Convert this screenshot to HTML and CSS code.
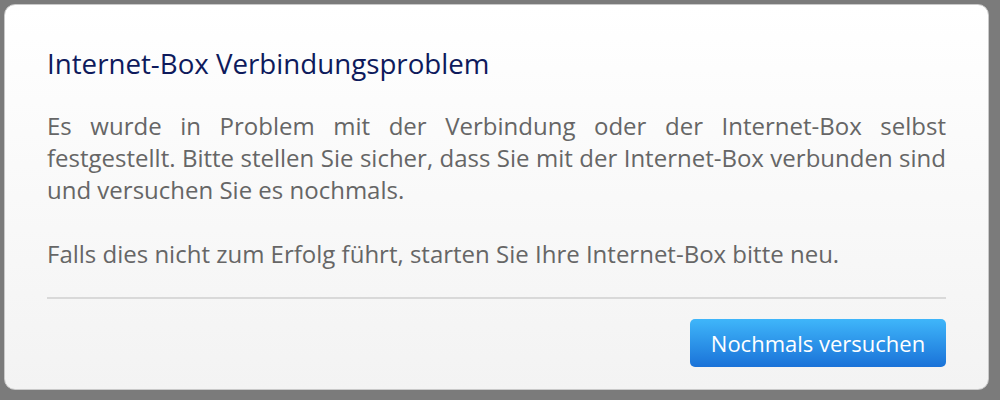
FILE: index.html
```html
<!DOCTYPE html>
<html lang="de">
<head>
<meta charset="utf-8">
<link rel="stylesheet" href="styles.css">
</head>
<body>
<div class="dialog">
  <h1 class="title">Internet-Box Verbindungsproblem</h1>
  <p class="text justify">Es wurde in Problem mit der Verbindung oder der Internet-Box selbst festgestellt. Bitte stellen Sie sicher, dass Sie mit der Internet-Box verbunden sind und versuchen Sie es nochmals.</p>
  <p class="text">Falls dies nicht zum Erfolg führt, starten Sie Ihre Internet-Box bitte neu.</p>
  <div class="divider"></div>
  <div class="actions">
    <button class="btn">Nochmals versuchen</button>
  </div>
</div>
</body>
</html>
```
FILE: styles.css
```css
html, body {
  margin: 0;
  padding: 0;
  height: 100%;
}
body {
  background: #7b7b7b;
  padding: 4px 4px 0 4px;
  box-sizing: border-box;
  font-family: "Open Sans", "Noto Sans", sans-serif;
}
.dialog {
  width: 985px;
  height: 386px;
  box-sizing: border-box;
  border: 1px solid #c9c9c9;
  border-radius: 11px;
  background: linear-gradient(#ffffff, #f3f3f3);
  padding: 38px 42px 0 42px;
}
.title {
  margin: 0;
  font-size: 27.7px;
  font-weight: 400;
  color: #0e1a5c;
  line-height: 40px;
}
.text {
  margin: 27px 0 0 0;
  font-size: 24px;
  line-height: 32px;
  color: #666666;
}
.text + .text {
  margin-top: 32px;
}
.justify {
  text-align: justify;
}
.divider {
  height: 2px;
  background: #d9d9d9;
  margin-top: 27px;
}
.actions {
  display: flex;
  justify-content: flex-end;
  margin-top: 20px;
}
.btn {
  font-family: inherit;
  font-size: 22px;
  color: #ffffff;
  border: none;
  border-radius: 5px;
  width: 256px;
  height: 48px;
  background: linear-gradient(#3fb6fa, #1a72d8);
  padding: 0;
}
```
